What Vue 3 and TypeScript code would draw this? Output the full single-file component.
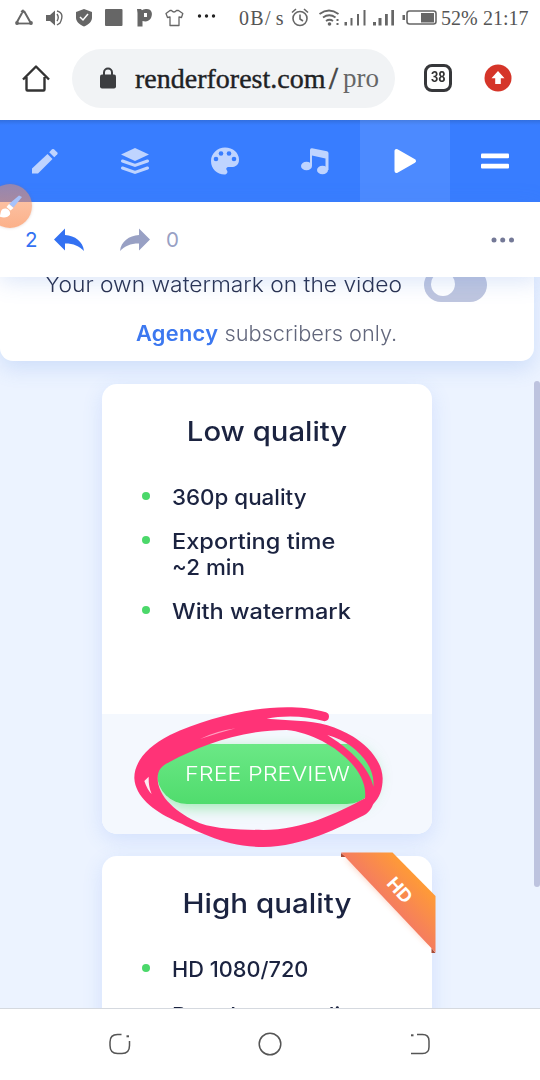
<script setup lang="ts">
interface Plan {
  title: string
  cls: string
  features: { lines: { text: string; cls: string }[] }[]
}

const low: Plan = {
  title: 'Low quality',
  cls: 'low',
  features: [
    { lines: [{ text: '360p quality', cls: 'w1' }] },
    { lines: [{ text: 'Exporting time', cls: 'w3' }, { text: '~2 min', cls: 'w1' }] },
    { lines: [{ text: 'With watermark', cls: 'w3' }] },
  ],
}
const high: Plan = {
  title: 'High quality',
  cls: 'high',
  features: [
    { lines: [{ text: 'HD 1080/720', cls: 'w0' }] },
    { lines: [{ text: 'Broadcast quality', cls: 'w2' }] },
  ],
}
</script>

<template>
  <div class="screen">
    <header class="status">
      <svg class="status-left" width="230" height="36" viewBox="0 0 230 36">
        <g fill="none" stroke="#666" stroke-width="2">
          <path d="M24 11 30.500 22.500M22 13 17 22" />
          <path d="M16 23.500h16" stroke-width="1.800" />
          <path d="M21.500 12.500l2.500-2" stroke-width="3" />
        </g>
        <g fill="#666">
          <circle cx="17" cy="23" r="1.900" /><circle cx="31" cy="23" r="1.900" />
          <path d="M46 15h4l5-4.500v15L50 21h-4z" />
          <path d="M84 9l8 3v5.500c0 4-3 7-8 9-5-2-8-5-8-9V12z" />
          <rect x="105" y="9" width="17.500" height="17" rx="1" />
          <path fill-rule="evenodd" d="M137 9h4l1 1.200C151 6.500 153.500 13 151 18c-1.800 3.300-5 4-8.500 3v5.500h-5V13zm7 4v4h3v-4z" />
        </g>
        <path d="M57 14q2.500 3.500 0 7M57 11q8 2 3 12l-3 2" fill="none" stroke="#666" stroke-width="1.400" />
        <path d="M80 17l3 3 5-6" fill="none" stroke="#fff" stroke-width="1.500" />
        <path d="M170 10.500l-4 3 1.500 4 2.500-.5v8.500h9V17l2.500.5 1.300-4-4.300-3h-2q-2.500 3-5 0z" fill="none" stroke="#666" stroke-width="1.300" stroke-linejoin="round" />
        <g fill="#222"><circle cx="199.500" cy="16" r="1.700" /><circle cx="206.500" cy="16" r="1.700" /><circle cx="213.500" cy="16" r="1.700" /></g>
      </svg>
      <span class="net">0B/<span class="net-s">s</span></span>
      <svg class="status-right" width="150" height="36" viewBox="290 0 150 36">
        <g fill="none" stroke="#666" stroke-width="1.600">
          <circle cx="300" cy="18.500" r="7" />
          <path d="M300 14.500v4.500l3 2M292 12.500l4-3.500M304 9l4 3.500" />
          <path d="M319.500 14q9.500-7 19 0M323 17.500q6.300-4.500 12.500 0M326 21q3.500-2.500 7 0" stroke-width="1.800" />
          <rect x="407" y="11" width="29" height="13" rx="2.500" />
        </g>
        <g fill="#666">
          <circle cx="329.500" cy="24" r="1.800" /><rect x="336.500" y="19" width="2" height="2" /><rect x="336.500" y="23" width="2" height="2" />
          <rect x="344.500" y="22" width="2.500" height="3.500" /><rect x="350.500" y="18" width="2" height="7.500" /><rect x="357" y="14" width="2" height="11.500" /><rect x="363.500" y="10" width="2" height="15.500" />
          <rect x="373" y="22" width="3" height="3.500" /><rect x="378.500" y="18" width="3" height="7.500" /><rect x="385" y="14" width="2.800" height="11.500" /><rect x="391.300" y="10" width="2.700" height="15.500" />
          <rect x="421" y="13" width="13" height="9.500" /><rect x="402.500" y="15" width="2.500" height="5" />
        </g>
      </svg>
      <span class="batt">52%</span>
      <span class="clock">21:17</span>
    </header>

    <div class="browser">
      <svg class="home" width="28" height="28" viewBox="0 0 28 28" fill="none" stroke="#333" stroke-width="2.400" stroke-linejoin="round">
        <path d="M1 15.500 14 2.500l13 13M4.500 13v12.500q0 1 1 1h16q1 0 1-1V13" />
      </svg>
      <div class="url">
        <svg class="lock" width="16" height="22" viewBox="0 0 16 22">
          <rect y="7.500" width="16" height="14" rx="2" fill="#3c3d40" />
          <path d="M4 8V5.500a4 4 0 018 0V8" fill="none" stroke="#3c3d40" stroke-width="2" />
        </svg>
        <span class="host">renderforest.com</span><span class="slash">/</span><span class="path">pro</span>
      </div>
      <div class="tabs-count"><span>38</span></div>
      <svg class="update" width="28" height="28" viewBox="0 0 28 28">
        <circle cx="14" cy="14" r="13.500" fill="#d53529" />
        <path d="M14 7l6.500 7.200h-3.700V20h-5.600v-5.800H7.500z" fill="#fff" />
      </svg>
    </div>

    <nav class="toolbar">
      <div class="tool">
        <svg width="28" height="28" viewBox="0 0 28 28" fill="#bfd4ff">
          <path d="M1 21.500 16.500 7l5 5L7 26.500H1z" /><path d="M18.200 5.300 21 2.300q1-.8 2 0L26.300 5.500q.8.900 0 1.800l-3 3z" />
        </svg>
      </div>
      <div class="tool">
        <svg width="28" height="28" viewBox="0 0 28 28" fill="#bfd4ff">
          <path d="M14 1 28 7.500 14 14 0 7.500z" />
          <path d="M1.500 14 14 18.500 26.500 14" fill="none" stroke="#bfd4ff" stroke-width="3" stroke-linecap="round" />
          <path d="M1.500 21 14 25.500 26.500 21" fill="none" stroke="#bfd4ff" stroke-width="3" stroke-linecap="round" />
        </svg>
      </div>
      <div class="tool">
        <svg width="28" height="28" viewBox="0 0 28 28">
          <path d="M14 .5C22 .5 28 6 28 12.500c0 6-4 8-9.500 7.500-3-.3-4 1.500-2.500 3.500 1.300 2-.5 4-2.500 4C6 27.500 0 22 0 14 0 6.500 6.500.5 14 .5z" fill="#bfd4ff" />
          <g fill="#387dff"><circle cx="5" cy="12" r="2.300" /><circle cx="10" cy="6.500" r="2.300" /><circle cx="18" cy="6.500" r="2.300" /><circle cx="23" cy="12" r="2.300" /></g>
        </svg>
      </div>
      <div class="tool">
        <svg width="28" height="28" viewBox="0 0 28 28" fill="#bfd4ff">
          <ellipse cx="5.500" cy="19" rx="5.500" ry="4.300" /><ellipse cx="21.500" cy="23" rx="5.500" ry="4.300" />
          <path d="M9 19V3q0-2 2-1.800L26 4.300q1.500.3 1.500 2V23h-3V11.500L11 8.500V19z" />
        </svg>
      </div>
      <div class="tool active">
        <svg width="28" height="28" viewBox="0 0 28 28"><path d="M5.500 4v20L23 14z" fill="#fff" stroke="#fff" stroke-width="4" stroke-linejoin="round" /></svg>
      </div>
      <div class="tool">
        <svg width="28" height="28" viewBox="0 0 28 28" fill="#fff"><rect y="6.500" width="28" height="4.700" rx="1" /><rect y="16.800" width="28" height="4.700" rx="1" /></svg>
      </div>
    </nav>

    <div class="history">
      <span class="num undo">2</span>
      <svg class="arr" width="30" height="24" viewBox="0 0 30 24"><path d="M0 11.500 11 .5V7c10 .5 18 6.500 19 16-5-5-10-7.500-19-7.500v7z" fill="#3371f2" /></svg>
      <svg class="arr redo" width="30" height="24" viewBox="0 0 30 24"><path d="M30 11.500 19 .5V7C9 7.500 1 13.500 0 23c5-5 10-7.500 19-7.500v7z" fill="#98a0c4" /></svg>
      <span class="num zero">0</span>
      <svg class="more" width="24" height="6" viewBox="0 0 24 6" fill="#747997"><circle cx="3" cy="3" r="2.500" /><circle cx="11.700" cy="3" r="2.500" /><circle cx="20.500" cy="3" r="2.500" /></svg>
    </div>

    <main class="content">
      <section class="watermark">
        <div class="row"><span class="own"><span class="own-text">Your own watermark on the video</span></span><i class="switch" /></div>
        <p class="agency"><b>Agency</b> <span>subscribers only.</span></p>
      </section>

      <section v-for="plan in [low, high]" :key="plan.cls" class="card" :class="plan.cls">
        <h2>{{ plan.title }}</h2>
        <ul>
          <li v-for="(f, i) in plan.features" :key="i">
            <span v-for="l in f.lines" :key="l.text" class="line" :class="l.cls">{{ l.text }}</span>
          </li>
        </ul>
        <footer v-if="plan.cls === 'low'"><button><span>FREE PREVIEW</span></button></footer>
        <svg v-else class="ribbon" width="110" height="115" viewBox="0 0 110 115">
          <defs>
            <linearGradient id="rib" gradientUnits="userSpaceOnUse" x1="50" y1="62" x2="86" y2="28"><stop offset="0" stop-color="#f2756a" /><stop offset="1" stop-color="#ff9c35" /></linearGradient>
            <filter id="soft" x="-20%" y="-20%" width="140%" height="140%"><feGaussianBlur stdDeviation="3" /></filter>
          </defs>
          <path d="M15 12 100 100 98 75 50 10z" fill="#f47d4a" opacity=".35" filter="url(#soft)" />
          <path d="M11 7v4h5zM105.500 107h-4v-5z" fill="#a84b35" />
          <path d="M11 6.500h51.500L105.500 50v56.500z" fill="url(#rib)" />
          <text x="70" y="50.500" transform="rotate(48 70 44)" text-anchor="middle" class="hd" textLength="28" lengthAdjust="spacingAndGlyphs">HD</text>
        </svg>
      </section>
      <i class="scrollbar" />
    </main>

    <footer class="sysnav">
      <svg width="24" height="24" viewBox="0 0 24 24"><path d="M13.500 2.500H9.500Q2 2.500 2 10v3.500Q2 21.500 9.500 21.500h4.500q7.500 0 7.500-8V9" /><path d="M18.500 4.300h2.500" stroke-width="2" /></svg>
      <svg width="24" height="24" viewBox="0 0 24 24"><circle cx="12" cy="12" r="10.800" /></svg>
      <svg width="24" height="24" viewBox="0 0 24 24"><path d="M9 2.500h5.500q6.500 0 6.500 6.500v6q0 6.500-6.500 6.500H3" /><path d="M3 3.300h2.500" stroke-width="2" /></svg>
    </footer>

    <svg class="scribble" width="360" height="170" viewBox="0 0 1080 510">
      <path
        fill="#ff3377"
        fill-rule="evenodd"
        d="M708 67C650 50 590 50 540 54C440 62 330 93 240 135C170 170 132 218 133 265C136 320 190 362 250 390C320 421 400 471 520 471C640 470 750 412 822 376C840 366 846 350 850 342C868 324 878 300 878 265C876 210 830 165 790 140C740 110 690 94 620 92L530 86C580 76 650 77 704 94A14 14 0 0 0 708 67Z
        M203 265C203 238 215 228 240 215C330 168 450 120 590 120C700 130 838 230 825 325C740 370 640 420 520 420C450 419 385 419 330 400C260 370 203 320 203 265Z
        M712 135C790 155 858 225 850 290C840 245 800 190 712 135Z"
      />
      <path d="M163 273L176 260Q175 290 185 312Q172 300 163 273Z" fill="#fdeaf2" />
      <path d="M330 147Q375 124 437 115Q385 129 330 147Z" fill="#ff9fc0" />
    </svg>
    <div class="brush">
      <svg width="44" height="44" viewBox="0 0 44 44"><path d="M21 20 31 11.500l3 1.500-8.500 10.500z" fill="#a6c2fb" /><path d="M21 20l4.500 4-3 2.500-4-3.500z" fill="#fff" /><path d="M11 32.500c2-1 1-4.500 3-7 4-3 9 .5 8 5-2 3.500-7 3.500-11 2z" fill="#fff" /></svg>
    </div>
  </div>
</template>

<style>
html, body { overflow: hidden; }
</style>

<style scoped>
* { box-sizing: border-box; }
.screen { position: relative; width: 540px; height: 1080px; overflow: hidden; background: #fff; font-family: Inter, "Open Sans", sans-serif; display: flex; flex-direction: column; }
.screen > * { flex-shrink: 0; }
svg { display: block; flex-shrink: 0; }
.status { height: 36px; display: flex; align-items: center; font: 20px/36px "Liberation Serif", serif; color: #555; white-space: nowrap; }
.status-left { width: 230px; }
.net { width: 51px; margin-left: 9px; letter-spacing: 1.300px; }
.net-s { margin-left: 4px; }
.batt { width: 38px; margin-left: 1px; }
.clock { margin-left: 4px; }
.browser { height: 84px; display: flex; align-items: center; background: #fff; }
.home { margin-left: 22px; }
.url { width: 323px; height: 59px; margin-left: 22px; border-radius: 30px; background: #f1f3f5; display: flex; align-items: center; padding-left: 28px; font: 28px/59px "Liberation Serif", serif; color: #202124; white-space: nowrap; }
.lock { margin-right: 19px; }
.host { width: 192px; -webkit-text-stroke: .4px #202124; }
.slash { width: 16px; padding-left: 2px; font-size: 32px; -webkit-text-stroke: .7px #444; color: #444; }
.path { color: #666; font-size: 27px; }
.tabs-count { width: 28px; height: 28px; margin-left: 29px; border: 3px solid #36373a; border-radius: 8px; font: bold 14.500px/22px Roboto, sans-serif; color: #333; display: flex; justify-content: center; }
.tabs-count span { transform: scaleX(.88); }
.update { margin-left: 32px; }
.toolbar { height: 82px; display: flex; background: linear-gradient(#326fdf, #387dff 5px); }
.tool { width: 90px; display: flex; align-items: center; justify-content: center; }
.tool.active { background: rgba(255, 255, 255, .1); }
.history { position: relative; z-index: 2; height: 75px; display: flex; align-items: center; background: #fff; box-shadow: 0 4px 22px rgba(70, 125, 225, .2); }
.num { font-size: 20.500px; line-height: 26px; }
.undo { color: #3371f2; margin-left: 25px; width: 29px; }
.redo { margin-left: 36px; }
.zero { color: #98a0c4; margin-left: 16px; }
.more { margin-left: auto; margin-right: 25px; }
.content { position: relative; height: 731px; overflow: hidden; background: #ecf3ff; display: flex; flex-direction: column; align-items: flex-start; }
.content > section { flex-shrink: 0; }
.watermark { width: 534px; height: 84px; background: #fff; border-radius: 0 0 13px 13px; box-shadow: 0 8px 20px rgba(80, 135, 225, .18); }
.row { display: flex; height: 25px; align-items: flex-end; padding-left: 45px; }
.own { width: 379px; font-size: 21px; line-height: 34px; height: 34px; font-weight: 350; color: #29304d; white-space: nowrap; }
.own-text { display: inline-block; transform: scaleX(1.086); transform-origin: 0 50%; }
.switch { position: relative; width: 63px; height: 34px; border-radius: 17px; background: #bfc6df; }
.switch::after { content: ""; position: absolute; left: 7px; top: 4px; width: 24px; height: 24px; border-radius: 50%; background: #fff; }
.agency { margin: 17px 0 0 136px; width: 300px; height: 30px; font-size: 21px; line-height: 30px; color: #62677c; font-weight: 350; white-space: nowrap; transform: scaleX(1.037); transform-origin: 0 50%; }
.agency b { color: #3c78f0; font-weight: 600; letter-spacing: .3px; }
.card { position: relative; width: 330px; margin-left: 102px; background: #fff; border-radius: 15px; box-shadow: 0 6px 20px rgba(80, 130, 240, .16); display: flex; flex-direction: column; }
.low { height: 450px; margin-top: 23px; }
.high { height: 450px; margin-top: 22px; }
h2 { margin: 29px 0 0; height: 36px; font-size: 26.500px; line-height: 36px; font-weight: 500; color: #1b2340; text-align: center; white-space: nowrap; transform: scaleX(1.115); }
.low h2 { transform: scaleX(1.105); }
ul { list-style: none; margin: 36px 0 0; padding: 0 0 0 70px; display: flex; flex-direction: column; gap: 18px; }
.high ul { gap: 20px; }
li { position: relative; font-size: 21px; line-height: 26px; color: #1b2340; font-weight: 500; }
.line { display: block; white-space: nowrap; transform-origin: 0 50%; }
.w0 { transform: scaleX(1.035); }
.w1 { transform: scaleX(1.065); }
.w2 { transform: scaleX(1.08); }
.w3 { transform: scaleX(1.122); }
li::before { content: ""; position: absolute; left: -30px; top: 7px; width: 8px; height: 8px; border-radius: 50%; background: #4bd86a; }
.card footer { margin-top: auto; height: 120px; background: #f4f8fe; border-radius: 0 0 15px 15px; display: flex; justify-content: center; align-items: center; }
button { width: 220px; height: 60px; border: 0; padding: 0; border-radius: 30px; background: linear-gradient(#6be886, #50dc6d); box-shadow: 0 4px 14px rgba(80, 220, 110, .5); color: #fff; font: 350 20px/60px Inter, sans-serif; white-space: nowrap; }
button span { display: inline-block; transform: scaleX(1.17); }
.ribbon { position: absolute; left: 228px; top: -10px; }
.hd { font: 700 18px Inter, sans-serif; fill: #fff; }
.scrollbar { position: absolute; left: 534px; top: 104px; width: 6px; height: 506px; border-radius: 3px; background: #bdc3df; }
.sysnav { height: 72px; border-top: 1px solid #d5d9df; background: #fff; display: flex; justify-content: center; align-items: center; gap: 126px; padding: 0 1px 2px 0; }
.sysnav svg { fill: none; stroke: #555; stroke-width: 1.500; }
.scribble { position: absolute; left: 90px; top: 690px; z-index: 4; }
.brush { position: absolute; left: -12px; top: 184px; z-index: 5; width: 44px; height: 44px; border-radius: 50%; background: linear-gradient(rgba(250, 146, 92, .48), rgba(250, 146, 92, .72)); box-shadow: 0 0 3px rgba(150, 100, 90, .3); }
</style>
